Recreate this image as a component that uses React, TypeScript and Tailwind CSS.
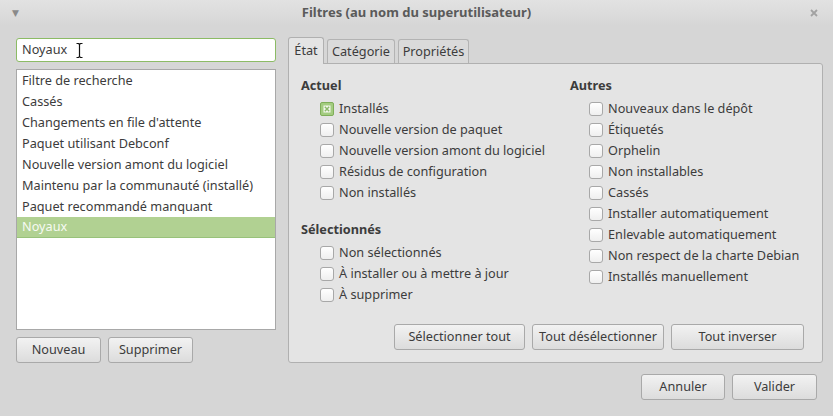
import React from 'react';

const font = { fontFamily: '"Noto Sans", "DejaVu Sans", sans-serif' };

const filters = [
  'Filtre de recherche',
  'Cassés',
  "Changements en file d'attente",
  'Paquet utilisant Debconf',
  'Nouvelle version amont du logiciel',
  'Maintenu par la communauté (installé)',
  'Paquet recommandé manquant',
  'Noyaux',
];

const actuel = [
  { label: 'Installés', checked: true },
  { label: 'Nouvelle version de paquet' },
  { label: 'Nouvelle version amont du logiciel' },
  { label: 'Résidus de configuration' },
  { label: 'Non installés' },
];

const selectionnes = [
  { label: 'Non sélectionnés' },
  { label: 'À installer ou à mettre à jour' },
  { label: 'À supprimer' },
];

const autres = [
  { label: 'Nouveaux dans le dépôt' },
  { label: 'Étiquetés' },
  { label: 'Orphelin' },
  { label: 'Non installables' },
  { label: 'Cassés' },
  { label: 'Installer automatiquement' },
  { label: 'Enlevable automatiquement' },
  { label: 'Non respect de la charte Debian' },
  { label: 'Installés manuellement' },
];

function Button({ label, className = '' }: { label: string; className?: string }) {
  return (
    <button
      className={`h-[26px] rounded-[3px] border border-[#a9a9a9] bg-gradient-to-b from-[#f2f2f2] to-[#dcdcdc] text-[12.7px] text-[#3c3c3c] ${className}`}
    >
      {label}
    </button>
  );
}

function Check({ label, checked }: { label: string; checked?: boolean }) {
  return (
    <label className="flex h-[21px] items-center gap-[5px]">
      {checked ? (
        <span className="flex h-[14px] w-[14px] items-center justify-center rounded-[2px] border border-[#7fae5a] bg-[#a3cc80]">
          <svg width="8" height="8" viewBox="0 0 8 8">
            <rect x="0.5" y="0.5" width="7" height="7" fill="#f4f8ee" />
            <path d="M1.8 1.8 L6.2 6.2 M6.2 1.8 L1.8 6.2" stroke="#8bb86a" strokeWidth="1.4" />
          </svg>
        </span>
      ) : (
        <span className="h-[14px] w-[14px] rounded-[3px] border border-[#a8a8a8] bg-gradient-to-b from-[#ffffff] to-[#efefef]" />
      )}
      <span>{label}</span>
    </label>
  );
}

function Section({ title, items }: { title: string; items: { label: string; checked?: boolean }[] }) {
  return (
    <div>
      <div className="h-[20px] font-bold leading-[20px]">{title}</div>
      <div className="mt-[3px] pl-[19px]">
        {items.map((it) => (
          <Check key={it.label} label={it.label} checked={it.checked} />
        ))}
      </div>
    </div>
  );
}

export default function App() {
  return (
    <div style={font} className="flex h-[416px] w-[833px] flex-col bg-[#d6d6d6] text-[12.7px] text-[#3c3c3c]">
      {/* Title bar */}
      <header className="flex h-[26px] items-center bg-gradient-to-b from-[#e2e2e2] to-[#d6d6d6] px-[12px]">
        <span className="w-[20px] text-[9px] text-[#8a8a8a]">▼</span>
        <span className="flex-1 text-center font-bold text-[13px] text-[#5a5a5a]">Filtres (au nom du superutilisateur)</span>
        <svg width="20" height="12" viewBox="0 0 20 12">
          <path d="M10 3 L16 9 M16 3 L10 9" stroke="#a2a2a2" strokeWidth="1.8" />
        </svg>
      </header>

      {/* Body */}
      <div className="flex gap-[12px] pl-[16px] pr-[10px] pt-[11px]">
        {/* Left */}
        <div className="mt-[1px] flex w-[260px] flex-col">
          <div className="flex h-[24px] items-center rounded-[3px] border border-[#8cbb65] bg-white px-[5px]">
            <span>Noyaux</span>
            <svg className="ml-[8px]" width="9" height="17" viewBox="0 0 9 17">
              <path
                d="M1.5 1.5 H3.5 L4.5 2.5 L5.5 1.5 H7.5 M4.5 2.5 V14.5 M1.5 15.5 H3.5 L4.5 14.5 L5.5 15.5 H7.5"
                fill="none"
                stroke="#ffffff"
                strokeWidth="3"
              />
              <path
                d="M1.5 1.5 H3.5 L4.5 2.5 L5.5 1.5 H7.5 M4.5 2.5 V14.5 M1.5 15.5 H3.5 L4.5 14.5 L5.5 15.5 H7.5"
                fill="none"
                stroke="#111111"
                strokeWidth="1.2"
              />
            </svg>
          </div>
          <div className="mt-[7px] h-[261px] border border-[#a8a8a8] bg-white">
            {filters.map((f, i) =>
              i === filters.length - 1 ? (
                <div key={f} className="flex h-[21px] items-center border-b border-[#98c27a] bg-[#b1d192] px-[5px] text-[#f6faf2]">
                  {f}
                </div>
              ) : (
                <div key={f} className="flex h-[21px] items-center px-[5px]">
                  {f}
                </div>
              ),
            )}
          </div>
          <div className="mt-[7px] flex gap-[7px]">
            <Button label="Nouveau" className="w-[85px]" />
            <Button label="Supprimer" className="w-[85px]" />
          </div>
        </div>

        {/* Right */}
        <div className="flex flex-1 flex-col">
          <div className="flex items-end gap-[3px] pl-0">
            <div className="relative z-10 -mb-px flex h-[27px] w-[36px] items-center justify-center rounded-t-[3px] border border-b-0 border-[#b0b0b0] bg-[#e4e4e4]">
              État
            </div>
            <div className="flex h-[24px] w-[68px] items-center justify-center rounded-t-[3px] border border-b-0 border-[#b3b3b3] bg-[#dadada]">
              Catégorie
            </div>
            <div className="flex h-[24px] w-[71px] items-center justify-center rounded-t-[3px] border border-b-0 border-[#b3b3b3] bg-[#dadada]">
              Propriétés
            </div>
          </div>
          <div className="flex h-[300px] flex-col rounded-b-[3px] rounded-tr-[3px] border border-[#b0b0b0] bg-[#e4e4e4] pl-[12px] pr-[18px] pt-[11px]">
            <div className="flex">
              <div className="flex w-[269px] flex-col gap-[16px]">
                <Section title="Actuel" items={actuel} />
                <Section title="Sélectionnés" items={selectionnes} />
              </div>
              <Section title="Autres" items={autres} />
            </div>
            <div className="mt-auto mb-[12px] flex justify-end gap-[7px]">
              <Button label="Sélectionner tout" className="w-[131px]" />
              <Button label="Tout désélectionner" className="w-[132px]" />
              <Button label="Tout inverser" className="w-[133px]" />
            </div>
          </div>
        </div>
      </div>

      {/* Footer */}
      <div className="mt-[11px] flex justify-end gap-[7px] pr-[16px]">
        <Button label="Annuler" className="w-[84px]" />
        <Button label="Valider" className="w-[85px]" />
      </div>
    </div>
  );
}
